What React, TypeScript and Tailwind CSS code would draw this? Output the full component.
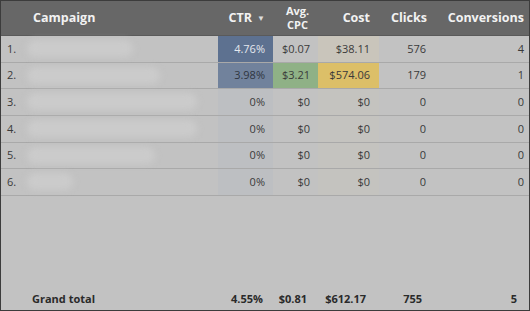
const rows = [
  { n: '1.', blob: 106, ctr: '4.76%', cpc: '$0.07', cost: '$38.11', clicks: '576', conv: '4', ctrBg: 'bg-[#5d7190]', ctrText: 'text-[#e4e8ee]', cpcBg: '', costBg: 'bg-[#c9c5bb]' },
  { n: '2.', blob: 133, ctr: '3.98%', cpc: '$3.21', cost: '$574.06', clicks: '179', conv: '1', ctrBg: 'bg-[#71829c]', ctrText: 'text-[#2f3540]', cpcBg: 'bg-[#8fb186]', costBg: 'bg-[#dcbf68]' },
  { n: '3.', blob: 170, ctr: '0%', cpc: '$0', cost: '$0', clicks: '0', conv: '0', ctrBg: 'bg-[#bdbfc2]', ctrText: 'text-[#3a3a3a]', cpcBg: '', costBg: 'bg-[#c4c3bf]' },
  { n: '4.', blob: 170, ctr: '0%', cpc: '$0', cost: '$0', clicks: '0', conv: '0', ctrBg: 'bg-[#bdbfc2]', ctrText: 'text-[#3a3a3a]', cpcBg: '', costBg: 'bg-[#c4c3bf]' },
  { n: '5.', blob: 128, ctr: '0%', cpc: '$0', cost: '$0', clicks: '0', conv: '0', ctrBg: 'bg-[#bdbfc2]', ctrText: 'text-[#3a3a3a]', cpcBg: '', costBg: 'bg-[#c4c3bf]' },
  { n: '6.', blob: 46, ctr: '0%', cpc: '$0', cost: '$0', clicks: '0', conv: '0', ctrBg: 'bg-[#bdbfc2]', ctrText: 'text-[#3a3a3a]', cpcBg: '', costBg: 'bg-[#c4c3bf]' },
];

const App = () => {
  return (
    <div className="w-[530px] h-[311px] border border-[#3c3c3c] bg-[#c2c2c2] flex flex-col font-['Open_Sans',sans-serif] overflow-hidden">
      {/* header */}
      <div className="h-[35px] bg-[#676767] flex text-[#f2f2f2] font-bold text-[12.5px] leading-none border-b border-[#5a5a5a]">
        <div className="w-[217px] flex items-center pl-[32px]">Campaign</div>
        <div className="w-[55px] flex items-center justify-end pr-[8px] gap-[5px]">
          CTR
          <span className="text-[8px] text-[#dddddd]">▼</span>
        </div>
        <div className="w-[45px] flex flex-col items-center justify-center pl-[4px] text-[11px] leading-[14px]">
          <span>Avg.</span>
          <span>CPC</span>
        </div>
        <div className="w-[61px] flex items-center justify-end pr-[9px]">Cost</div>
        <div className="w-[56px] flex items-center justify-end pr-[8px]">Clicks</div>
        <div className="flex-1 flex items-center justify-end pr-[5px]">Conversions</div>
      </div>

      {/* rows */}
      {rows.map((r) => (
        <div key={r.n} className="h-[26.67px] flex text-[11px] text-[#3a3a3a] border-b border-[#a9a9a9]">
          <div className="w-[217px] flex items-center pl-[6px] relative">
            <span>{r.n}</span>
            <div
              className="absolute left-[26px] top-[4px] h-[17px] rounded-full bg-[#cbcbcb] blur-[3px]"
              style={{ width: r.blob }}
            />
          </div>
          <div className={`w-[55px] flex items-center justify-end pr-[8px] ${r.ctrBg} ${r.ctrText}`}>{r.ctr}</div>
          <div className={`w-[45px] flex items-center justify-end pr-[8px] ${r.cpcBg}`}>{r.cpc}</div>
          <div className={`w-[61px] flex items-center justify-end pr-[9px] ${r.costBg}`}>{r.cost}</div>
          <div className="w-[56px] flex items-center justify-end pr-[9px]">{r.clicks}</div>
          <div className="flex-1 flex items-center justify-end pr-[5px]">{r.conv}</div>
        </div>
      ))}

      <div className="flex-1" />

      {/* grand total */}
      <div className="h-[22px] flex items-center text-[11px] font-bold text-[#2a2a2a]">
        <div className="w-[217px] pl-[31px]">Grand total</div>
        <div className="w-[55px] text-right pr-[10px]">4.55%</div>
        <div className="w-[45px] text-right pr-[11px]">$0.81</div>
        <div className="w-[61px] text-right pr-[13px]">$612.17</div>
        <div className="w-[56px] text-right pr-[13px]">755</div>
        <div className="flex-1 text-right pr-[12px]">5</div>
      </div>
    </div>
  );
};

export default App;
